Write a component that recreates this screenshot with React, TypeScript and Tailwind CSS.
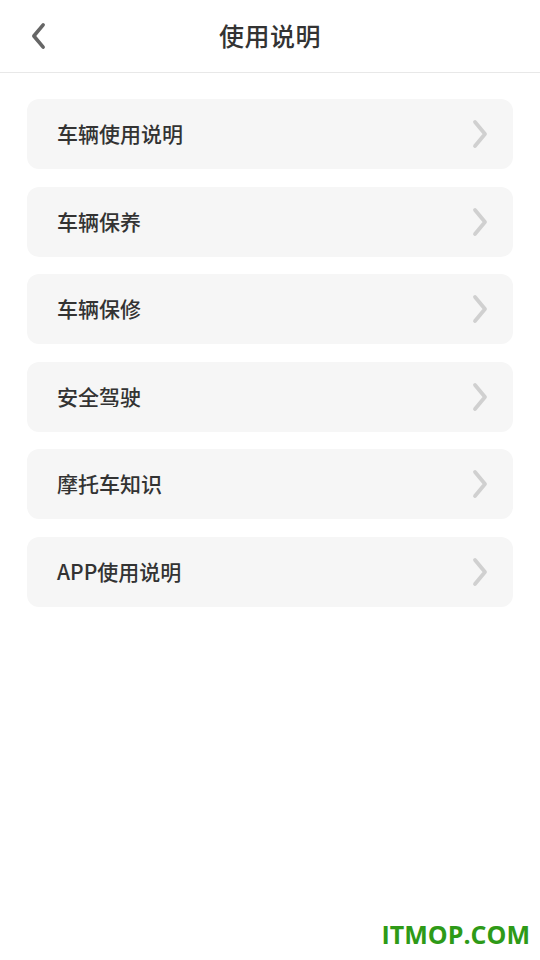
const ITEMS = ["车辆使用说明", "车辆保养", "车辆保修", "安全驾驶", "摩托车知识", "APP使用说明"];

const FONT = { fontFamily: '"Noto Sans CJK SC", "Noto Sans", sans-serif' };

function Arrow({ left, className }: { left?: boolean; className?: string }) {
  return (
    <svg viewBox="0 0 16 30" className={className} fill="none" stroke="currentColor" strokeWidth={3.8} strokeLinecap="round" strokeLinejoin="round">
      {left ? <polyline points="13,3 3,15 13,27" /> : <polyline points="3,3 13,15 3,27" />}
    </svg>
  );
}

export default function App() {
  return (
    <div className="relative w-[540px] h-[960px] bg-white overflow-hidden" style={FONT}>
      <header className="relative h-[73px] flex items-center justify-center border-b border-[#e8e8e8]">
        <button className="absolute left-[31px] top-[22px] text-[#666]">
          <Arrow left className="w-[15px] h-[28px]" />
        </button>
        <h1 className="text-[25px] font-medium text-[#333] tracking-[0.5px]">使用说明</h1>
      </header>

      <div className="px-[27px] pt-[26px] flex flex-col gap-[17.5px]">
        {ITEMS.map((item) => (
          <div
            key={item}
            className="h-[70px] rounded-[12px] bg-[#f6f6f6] flex items-center justify-between pl-[30px] pr-[25px]"
          >
            <span className="text-[21px] text-[#333] font-medium">{item}</span>
            <Arrow className="w-[16px] h-[30px] text-[#d0d0d0]" />
          </div>
        ))}
      </div>

      <div
        className="absolute right-[10px] bottom-[7px] text-[25px] font-bold text-[#2e9a17]"
        style={{ fontFamily: '"Open Sans", "Liberation Sans", sans-serif' }}
      >
        ITMOP.COM
      </div>
    </div>
  );
}
